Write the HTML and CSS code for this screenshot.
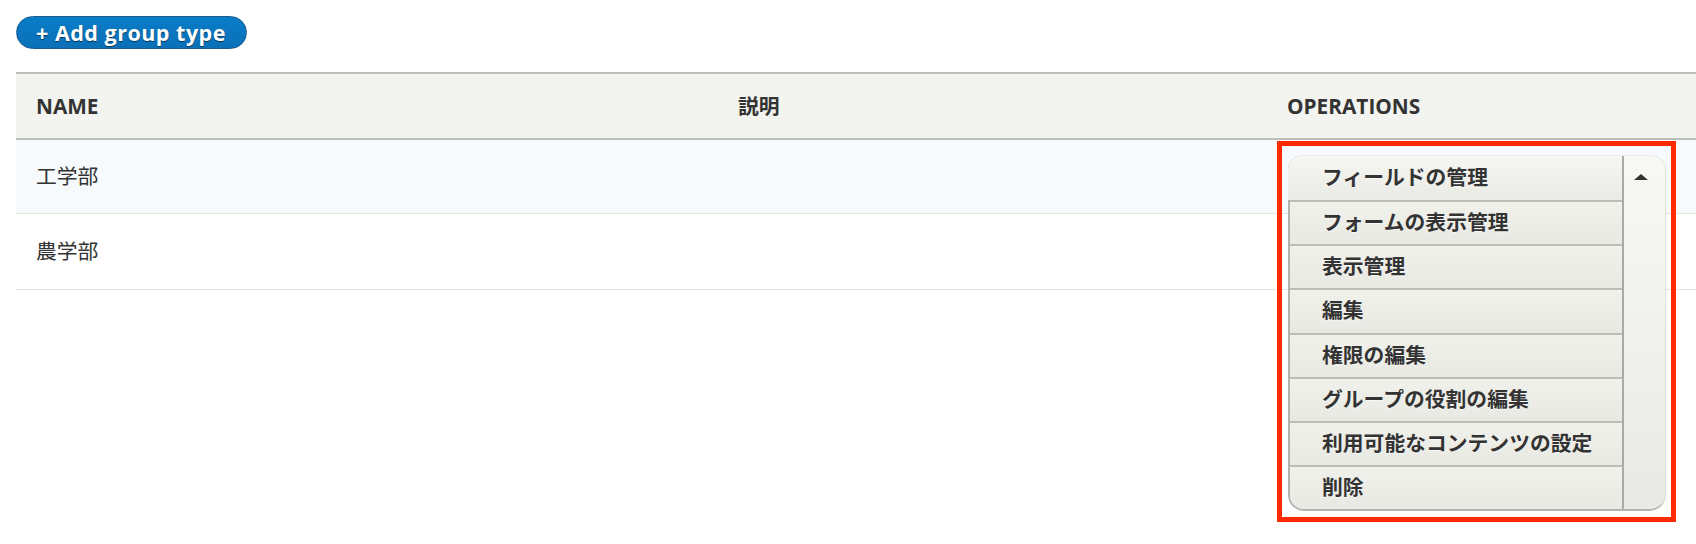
FILE: index.html
```html
<!DOCTYPE html>
<html lang="ja">
<head>
<meta charset="utf-8">
<title>Group types</title>
<link rel="stylesheet" href="styles.css">
</head>
<body>
<div class="page">
  <div class="actions">
    <a class="button-primary" href="#">+ Add group type</a>
  </div>
  <table class="types">
    <colgroup>
      <col class="c-name">
      <col class="c-desc">
      <col class="c-ops">
    </colgroup>
    <thead>
      <tr><th>Name</th><th>説明</th><th>Operations</th></tr>
    </thead>
    <tbody>
      <tr class="is-hover">
        <td>工学部</td>
        <td></td>
        <td class="ops">
          <div class="dropbutton-wrapper">
            <div class="dropbutton">
              <div class="db-list">
                <div class="db-primary">フィールドの管理</div>
                <ul class="db-secondary">
                  <li>フォームの表示管理</li>
                  <li>表示管理</li>
                  <li>編集</li>
                  <li>権限の編集</li>
                  <li>グループの役割の編集</li>
                  <li>利用可能なコンテンツの設定</li>
                  <li>削除</li>
                </ul>
              </div>
              <div class="db-toggle"><span class="db-arrow"></span></div>
            </div>
            <div class="highlight"></div>
          </div>
        </td>
      </tr>
      <tr class="row-tall">
        <td>農学部</td>
        <td></td>
        <td></td>
      </tr>
    </tbody>
  </table>
</div>
</body>
</html>
```
FILE: styles.css
```css
html, body {
  margin: 0;
  padding: 0;
  background: #fff;
}
body {
  font-family: "Open Sans", "Noto Sans CJK JP", sans-serif;
  color: #333;
  font-size: 20.8px;
}
.page {
  box-sizing: border-box;
  padding: 16px 0 0 16px;
  min-height: 544px;
}
.actions {
  height: 33px;
  margin-bottom: 23px;
}
.button-primary {
  display: inline-flex;
  align-items: center;
  box-sizing: border-box;
  height: 33px;
  padding: 0 20px 0 19px;
  border: 1px solid #1e5c90;
  border-radius: 20px;
  background: linear-gradient(to bottom, #0a7dc7, #0a70b8);
  color: #fff;
  font-weight: 700;
  font-size: 21.5px;
  letter-spacing: 0.5px;
  line-height: 1;
  text-decoration: none;
  text-shadow: 0 1px 1px rgba(0, 0, 0, 0.55);
}
.types {
  width: 100%;
  border-collapse: separate;
  border-spacing: 0;
  table-layout: fixed;
}
.c-name { width: 702px; }
.c-desc { width: 549px; }
.types th {
  background: #f3f3ef;
  border-top: 2px solid #bfbfba;
  border-bottom: 2px solid #bfbfba;
  padding: 0 20px;
  line-height: 64px;
  text-align: left;
  text-transform: uppercase;
  font-weight: 700;
  font-size: 20.8px;
  color: #333;
}
.types td {
  padding: 0 20px;
  line-height: 73px;
  border-bottom: 1px solid #e6e4df;
  vertical-align: middle;
  color: #333;
  white-space: nowrap;
}
.types tr.row-tall td {
  line-height: 75px;
}
.types tr.is-hover td {
  background: #f6fafd;
}
.types td.ops {
  vertical-align: top;
}
.dropbutton-wrapper {
  position: relative;
  height: 73px;
  line-height: normal;
}
.dropbutton {
  position: absolute;
  top: 16px;
  left: 1px;
  z-index: 1;
  box-sizing: border-box;
  width: 377px;
  display: flex;
  border-left: 2px solid #b3b3ae;
  border-bottom: 2px solid #b3b3ae;
  border-radius: 14px 14px 16px 16px;
  background: linear-gradient(to bottom, #f6f6f3, #e8e8e2);
  box-shadow: 1px 0 0 #e2e2dc, 0 -1px 0 #ecece7;
}
.db-list {
  flex: 1;
  min-width: 0;
}
.db-primary {
  display: flex;
  align-items: center;
  box-sizing: border-box;
  height: 44px;
  margin-left: -2px;
  padding: 0 0 5px 34px;
  border-top-left-radius: 14px;
  background: linear-gradient(to bottom, #f6f6f2, #eaeae5);
  font-weight: 700;
  font-size: 20.8px;
  color: #333;
  text-shadow: 0 1px 0 rgba(255, 255, 255, 0.6);
}
.db-secondary {
  list-style: none;
  margin: 0;
  padding: 0;
}
.db-secondary li {
  display: flex;
  align-items: center;
  box-sizing: border-box;
  height: 44.2px;
  padding: 0 0 4px 32px;
  border-top: 2px solid #bdbdb8;
  background: linear-gradient(to bottom, #f1f1ec, #e9e9e4);
  font-weight: 700;
  font-size: 20.8px;
  color: #333;
  text-shadow: 0 1px 0 rgba(255, 255, 255, 0.6);
}
.db-secondary li:last-child {
  border-bottom-left-radius: 14px;
}
.db-toggle {
  box-sizing: border-box;
  width: 43px;
  padding: 18px 0 0 10px;
  border-left: 2px solid #a9a9a5;
  border-top-right-radius: 14px;
  border-bottom-right-radius: 16px;
  background: linear-gradient(to bottom, #f8f8f5, #e9e9e4);
}
.db-arrow {
  display: block;
  width: 0;
  height: 0;
  border-left: 7px solid transparent;
  border-right: 7px solid transparent;
  border-bottom: 6px solid #333;
}
.highlight {
  position: absolute;
  top: 1px;
  left: -10px;
  z-index: 2;
  box-sizing: border-box;
  width: 399px;
  height: 381px;
  border: 5px solid #ff2a00;
  pointer-events: none;
}
```
